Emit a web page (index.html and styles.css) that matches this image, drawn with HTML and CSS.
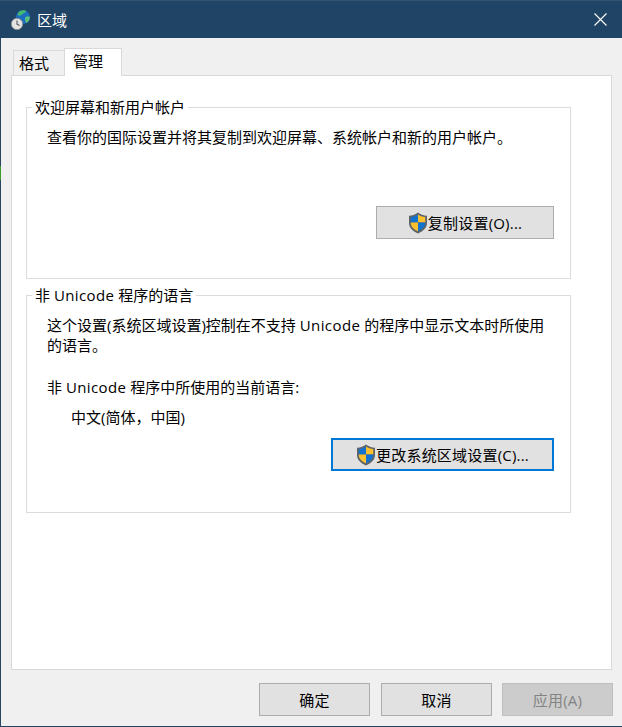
FILE: index.html
```html
<!DOCTYPE html>
<html lang="zh-CN">
<head>
    <meta charset="UTF-8">
    <title>区域</title>
    <link rel="stylesheet" href="styles.css">
</head>
<body>
<svg class="defs" width="0" height="0">
    <symbol id="shield" viewBox="0 0 20 22">
        <path d="M10 0.6C7.6 2.6 4.6 3.6 1 3.8V11c0 4.6 3.4 8.2 9 10.4 5.6-2.2 9-5.8 9-10.4V3.8C15.4 3.6 12.4 2.6 10 0.6z" fill="#5f6468"/>
        <path d="M10 2.4C8 3.9 5.6 4.8 2.8 5.1V10.6H10z" fill="#1173cf"/>
        <path d="M10 2.4C12 3.9 14.4 4.8 17.2 5.1V10.6H10z" fill="#fbc02d"/>
        <path d="M2.8 10.6H10V19.3C5.6 17.4 2.8 14.6 2.8 11z" fill="#fbc02d"/>
        <path d="M17.2 10.6H10V19.3C14.4 17.4 17.2 14.6 17.2 11z" fill="#1173cf"/>
    </symbol>
</svg>

<div class="window">
    <div class="titlebar">
        <svg class="app-icon" width="22" height="22" viewBox="0 0 22 22">
            <circle cx="13" cy="8" r="7" fill="#1c6fc0"/>
            <path d="M8.5 3.5C10 1.5 13 1 15.5 1.6 16.5 3 15 4.2 13 4.4 12 6 10 7 8 6.4 7.6 5.4 7.8 4.4 8.5 3.5z" fill="#46b86a"/>
            <path d="M15.5 8c1.6-0.8 3-0.6 4.4-0.2 0 2.6-1.2 5-3.4 6.2-1.4-1.4-2-4.2-1-6z" fill="#5cc27a"/>
            <circle cx="7" cy="15" r="5.7" fill="#e4e4e4" stroke="#8c8c8c"/>
            <path d="M7 11.5V15.2L9.6 16.4" fill="none" stroke="#555" stroke-width="1.1"/>
        </svg>
        <span class="title">区域</span>
        <svg class="close" width="13" height="13" viewBox="0 0 13 13">
            <path d="M0.5 0.5L12.5 12.5M12.5 0.5L0.5 12.5" stroke="#fff" stroke-width="1.1" fill="none"/>
        </svg>
    </div>

    <div class="content">
        <div class="tabs">
            <div class="tab">格式</div>
            <div class="tab active">管理</div>
        </div>

        <div class="panel">
            <fieldset class="group group-welcome">
                <legend>欢迎屏幕和新用户帐户</legend>
                <p class="desc">查看你的国际设置并将其复制到欢迎屏幕、系统帐户和新的用户帐户。</p>
                <div class="group-actions">
                    <button class="btn btn-copy"><svg class="shield"><use href="#shield"/></svg>复制设置(O)...</button>
                </div>
            </fieldset>

            <fieldset class="group group-locale">
                <legend>非 <span class="en">Unicode</span> 程序的语言</legend>
                <p class="desc">这个设置(系统区域设置)控制在不支持 <span class="en">Unicode</span> 的程序中显示文本时所使用的语言。</p>
                <p class="current-label">非 <span class="en">Unicode</span> 程序中所使用的当前语言:</p>
                <p class="current-value">中文(简体，中国)</p>
                <div class="group-actions">
                    <button class="btn btn-change"><svg class="shield"><use href="#shield"/></svg>更改系统区域设置(C)...</button>
                </div>
            </fieldset>
        </div>

        <div class="footer">
            <button class="btn btn-footer">确定</button>
            <button class="btn btn-footer">取消</button>
            <button class="btn btn-footer btn-disabled">应用(A)</button>
        </div>
    </div>
</div>
</body>
</html>
```

FILE: styles.css
```css
* {
    box-sizing: border-box;
}

html, body {
    margin: 0;
    height: 100%;
}

body {
    font-family: "Open Sans", "Noto Sans CJK SC", sans-serif;
    font-size: 15px;
    color: #000;
    overflow: hidden;
}

.defs {
    display: block;
    height: 0;
}

.en {
    letter-spacing: 0.4px;
}

.window {
    position: relative;
    width: 622px;
    height: 727px;
    display: flex;
    flex-direction: column;
    background-color: #f0f0f0;
    border-left: 1px solid #2b4560;
    border-bottom: 1px solid #1f4466;
}

/* bit of the desktop showing through at the window edge */
.window::before {
    content: "";
    position: absolute;
    left: -1px;
    top: 166px;
    width: 1px;
    height: 14px;
    background-color: #3c9a2e;
}

.titlebar {
    height: 38px;
    margin-left: -1px;
    display: flex;
    align-items: center;
    padding: 0 15px 0 10px;
    background-color: #1f4466;
    border-top: 1px solid #34536f;
    color: #fff;
}

.app-icon {
    margin-right: 5px;
}

.title {
    font-size: 15px;
    flex: 1;
}

.content {
    flex: 1;
    display: flex;
    flex-direction: column;
    padding: 10px 10px 0 10px;
}

.tabs {
    display: flex;
    align-items: flex-end;
    height: 28px;
    padding-left: 2px;
    position: relative;
    z-index: 1;
}

.tab {
    width: 52px;
    height: 25px;
    margin-bottom: 1px;
    padding-left: 5px;
    line-height: 25px;
    background-color: #f0f0f0;
    border: 1px solid #d9d9d9;
    border-bottom: none;
}

.tab.active {
    width: 58px;
    height: 28px;
    margin-bottom: 0;
    margin-left: -1px;
    padding-left: 8px;
    line-height: 25px;
    background-color: #fff;
}

.panel {
    height: 595px;
    margin-top: -1px;
    padding: 21px 40px 0 14px;
    background-color: #fff;
    border: 1px solid #d9d9d9;
}

.group {
    margin: 0;
    padding: 0;
    min-width: 0;
    border: 1px solid #dcdcdc;
}

.group legend {
    margin-left: 5px;
    padding: 0 3px;
    line-height: 20px;
}

.group-welcome {
    height: 182px;
    margin-bottom: 6px;
}

.group-locale {
    height: 228px;
}

.group p {
    margin: 0;
    padding-left: 20px;
    line-height: 20px;
}

.group .desc {
    margin-top: 10px;
}

.group-locale .desc {
    width: 525px;
}

.group .current-label {
    margin-top: 22px;
}

.group .current-value {
    margin-top: 10px;
    padding-left: 44px;
}

.group-actions {
    display: flex;
    justify-content: flex-end;
    padding-right: 16px;
}

.group-welcome .group-actions {
    margin-top: 59px;
}

.group-locale .group-actions {
    margin-top: 11px;
}

.btn {
    display: flex;
    align-items: center;
    justify-content: center;
    height: 33px;
    padding: 0;
    font-family: inherit;
    font-size: 15px;
    letter-spacing: 0.2px;
    color: #000;
    background-color: #e1e1e1;
    border: 1px solid #adadad;
}

.btn-copy {
    width: 178px;
}

.btn-change {
    width: 223px;
    border: 2px solid #0078d7;
}

.shield {
    width: 20px;
    height: 22px;
}

.footer {
    display: flex;
    justify-content: flex-end;
    gap: 11px;
    padding-top: 13px;
    margin-right: -1px;
}

.btn-footer {
    width: 111px;
}

.btn-disabled {
    margin-left: -1px;
    color: #838383;
    background-color: #cccccc;
    border-color: #bfbfbf;
}
```
